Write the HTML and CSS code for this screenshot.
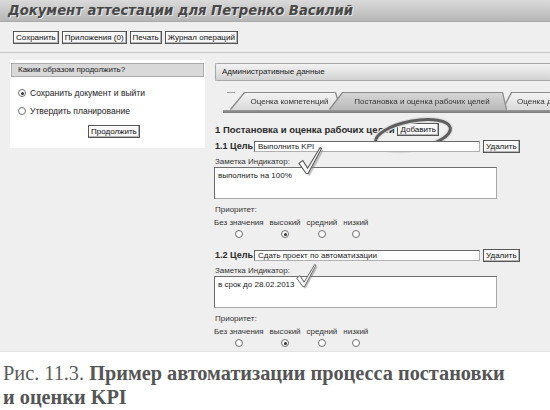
FILE: index.html
```html
<!DOCTYPE html>
<html lang="ru">
<head>
<meta charset="utf-8">
<title>Документ аттестации</title>
<link rel="stylesheet" href="styles.css">
</head>
<body>
<div class="shot">
  <div class="titlebar"><h1>Документ аттестации для Петренко Василий</h1></div>
  <div class="toolbar">
    <span class="btn">Сохранить</span>
    <span class="btn">Приложения (0)</span>
    <span class="btn">Печать</span>
    <span class="btn">Журнал операций</span>
  </div>
  <div class="main">
    <div class="left">
      <div class="panel">
        <div class="panel-h">Каким образом продолжить?</div>
        <div class="opt"><span class="radio on"></span>Сохранить документ и выйти</div>
        <div class="opt"><span class="radio"></span>Утвердить планирование</div>
        <span class="btn btn-go">Продолжить</span>
      </div>
    </div>
    <div class="right">
      <div class="rhead">Административные данные</div>
      <div class="tabs">
        <span class="dash"></span>
        <div class="tabw t1"><div class="tab">Оценка компетенций</div></div>
        <div class="tabw t2"><div class="tab">Постановка и оценка рабочих целей</div></div>
        <div class="tabw t3"><div class="tab">Оценка д</div></div>
      </div>
      <div class="tabline"></div>
      <div class="content">
        <div class="heading"><span class="htext">1 Постановка и оценка рабочих целей</span><span class="btn">Добавить</span></div>
        <svg class="oval" viewBox="0 0 86 40" width="86" height="40">
          <ellipse cx="42" cy="19" rx="38" ry="14" transform="rotate(-11 42 19)" fill="none" stroke="#dcdcdc" stroke-width="5.5"/>
          <ellipse cx="42" cy="19" rx="38" ry="14" transform="rotate(-11 42 19)" fill="none" stroke="#5e5e5e" stroke-width="3"/>
        </svg>

        <div class="goal">
          <div class="row"><span class="glabel">1.1 Цель</span><span class="input">Выполнить KPI</span><span class="btn">Удалить</span></div>
          <div class="lbl">Заметка Индикатор:</div>
          <div class="ta">выполнить на 100%</div>
          <div class="lbl prio">Приоритет:</div>
          <div class="choices">
            <div class="ch"><span>Без значения</span><span class="radio"></span></div>
            <div class="ch"><span>высокий</span><span class="radio on"></span></div>
            <div class="ch"><span>средний</span><span class="radio"></span></div>
            <div class="ch"><span>низкий</span><span class="radio"></span></div>
          </div>
          <svg class="check c1" viewBox="0 0 28 31" width="27" height="30">
            <path d="M2 18 L6 15 L11 23 L24 1.5 L25.5 2.5 L11.5 28.5 L9.5 28.5 Z" fill="#8a8a8a" transform="translate(2 2)" opacity="0.5"/>
            <path d="M2 18 L6 15 L11 23 L24 1.5 L25.5 2.5 L11.5 28.5 L9.5 28.5 Z" fill="#fbfbfb" stroke="#555" stroke-width="1.1"/>
          </svg>
        </div>

        <div class="goal g2">
          <div class="row"><span class="glabel">1.2 Цель</span><span class="input">Сдать проект по автоматизации</span><span class="btn">Удалить</span></div>
          <div class="lbl">Заметка Индикатор:</div>
          <div class="ta">в срок до 28.02.2013</div>
          <div class="lbl prio">Приоритет:</div>
          <div class="choices">
            <div class="ch"><span>Без значения</span><span class="radio"></span></div>
            <div class="ch"><span>высокий</span><span class="radio on"></span></div>
            <div class="ch"><span>средний</span><span class="radio"></span></div>
            <div class="ch"><span>низкий</span><span class="radio"></span></div>
          </div>
          <svg class="check c2" viewBox="0 0 28 31" width="23" height="26">
            <path d="M2 18 L6 15 L11 23 L24 1.5 L25.5 2.5 L11.5 28.5 L9.5 28.5 Z" fill="#8a8a8a" transform="translate(2 2)" opacity="0.5"/>
            <path d="M2 18 L6 15 L11 23 L24 1.5 L25.5 2.5 L11.5 28.5 L9.5 28.5 Z" fill="#fbfbfb" stroke="#555" stroke-width="1.1"/>
          </svg>
        </div>
      </div>
    </div>
  </div>
</div>
<p class="caption"><span class="reg">Рис. 11.3.</span> <b>Пример автоматизации процесса постановки<br>и оценки KPI</b></p>
</body>
</html>
```

FILE: styles.css
```css
body {
  margin: 0;
  background: #ffffff;
  font-family: "Liberation Sans", Arial, sans-serif;
  color: #222;
}

.shot {
  height: 352px;
  background: #efefef;
  overflow: hidden;
  border-bottom: 1px solid #e2e2e2;
  box-sizing: border-box;
}

.titlebar {
  height: 22px;
  box-sizing: border-box;
  padding-left: 8px;
  background: linear-gradient(#dadada, #b6b6b6);
  border-bottom: 1px solid #a9a9a9;
}

.titlebar h1 {
  margin: 0;
  font: italic bold 13.2px/21px "DejaVu Sans", sans-serif;
  color: #474747;
  text-shadow: 1px 1px 0 #e6e6e6;
  white-space: nowrap;
}

.toolbar {
  height: 31px;
  box-sizing: border-box;
  display: flex;
  align-items: flex-start;
  gap: 3px;
  padding: 9px 0 0 13px;
  border-bottom: 1px solid #c9c9c9;
}

.btn {
  display: inline-block;
  height: 13px;
  box-sizing: border-box;
  padding: 0 2px;
  font-size: 8px;
  line-height: 11px;
  color: #111;
  background: #f7f7f7;
  border: 1px solid #555;
  box-shadow: inset -1px -1px 0 #b4b4b4, inset 1px 1px 0 #fff;
  white-space: nowrap;
}

.main {
  display: flex;
}

.left {
  width: 213px;
  flex: none;
}

.panel {
  margin: 7px 0 0 10px;
  width: 195px;
  box-sizing: border-box;
  background: #fff;
  padding: 3px 1px 10px;
}

.panel-h {
  height: 14px;
  box-sizing: border-box;
  background: #d9d9d9;
  border: 1px solid #ababab;
  padding-left: 6px;
  font-size: 8px;
  line-height: 12px;
  color: #222;
}

.opt {
  display: flex;
  align-items: center;
  gap: 4px;
  height: 18px;
  padding-left: 7px;
  font-size: 8.5px;
  color: #222;
}

.panel-h + .opt {
  margin-top: 7px;
}

.btn-go {
  margin: 4px 0 0 77px;
}

.radio {
  display: inline-block;
  width: 8px;
  height: 8px;
  box-sizing: border-box;
  border: 1px solid #6e6e6e;
  border-radius: 50%;
  background: #fff;
  position: relative;
}

.radio.on::after {
  content: "";
  position: absolute;
  left: 1.5px;
  top: 1.5px;
  width: 3px;
  height: 3px;
  border-radius: 50%;
  background: #333;
}

.right {
  flex: 1;
  padding-top: 10px;
  min-width: 0;
}

.rhead {
  margin-left: 2px;
  height: 18px;
  box-sizing: border-box;
  border: 1px solid #a8a8a8;
  border-right: none;
  border-radius: 2px 0 0 2px;
  background: linear-gradient(#f3f3f3, #d2d2d2);
  padding-left: 6px;
  font-size: 8px;
  line-height: 16px;
  color: #222;
}

.tabs {
  margin-top: 7px;
  height: 22px;
  display: flex;
  align-items: flex-end;
  overflow: hidden;
}

.dash {
  align-self: flex-start;
  margin: 4px -4px 0 14px;
  width: 8px;
  height: 1px;
  background: #a0a0a0;
  flex: none;
}

.tabw {
  flex: none;
  filter: drop-shadow(-1px 0 0 #8c8c8c) drop-shadow(1px 0 0 #8c8c8c) drop-shadow(0 -1px 0 #8c8c8c);
}

.tab {
  height: 17px;
  font-size: 8px;
  line-height: 18px;
  color: #333;
  text-align: center;
  white-space: nowrap;
}

.t1 .tab {
  width: 109px;
  padding-left: 8px;
  box-sizing: border-box;
  background: linear-gradient(#f4f4f4, #d9d9d9);
  clip-path: polygon(14px 0, calc(100% - 5px) 0, 100% 100%, 0 100%);
}

.t2 {
  margin-left: -10px;
  position: relative;
  z-index: 2;
}

.t2 .tab {
  width: 176px;
  padding: 0 4px 0 12px;
  box-sizing: border-box;
  background: linear-gradient(#d6d6d6, #bababa);
  clip-path: polygon(13px 0, calc(100% - 4px) 0, 100% 100%, 0 100%);
}

.t3 {
  margin-left: -3px;
  position: relative;
  z-index: 1;
}

.t3 .tab {
  width: 60px;
  padding-left: 14px;
  box-sizing: border-box;
  text-align: left;
  background: linear-gradient(#f4f4f4, #d9d9d9);
  clip-path: polygon(9px 0, 100% 0, 100% 100%, 0 100%);
}

.tabline {
  margin-left: 10px;
  height: 3px;
  background: linear-gradient(#9c9c9c, #7a7a7a);
}

.content {
  position: relative;
  padding-left: 1px;
}

.heading {
  margin-top: 9px;
  height: 14px;
  display: flex;
  align-items: center;
  gap: 3px;
  padding-left: 1px;
}

.htext {
  font-size: 9.5px;
  font-weight: bold;
  color: #2a2a2a;
  white-space: nowrap;
}

.oval {
  position: absolute;
  left: 158px;
  top: -6px;
}

.goal {
  position: relative;
  margin-top: 3px;
}

.goal.g2 {
  margin-top: 10px;
}

.row {
  display: flex;
  align-items: center;
  height: 14px;
}

.glabel {
  width: 40px;
  flex: none;
  padding-left: 1px;
  box-sizing: border-box;
  font-size: 9px;
  font-weight: bold;
  color: #2a2a2a;
}

.input {
  width: 226px;
  height: 11px;
  box-sizing: border-box;
  background: #fff;
  border: 1px solid #6a6a6a;
  border-right-color: #b0b0b0;
  border-bottom-color: #b0b0b0;
  padding-left: 3px;
  font-size: 8px;
  line-height: 9px;
  color: #222;
  margin-right: 3px;
}

.lbl {
  margin-top: 4px;
  padding-left: 1px;
  font-size: 8px;
  line-height: 10px;
  color: #333;
}

.ta {
  width: 283px;
  height: 32px;
  box-sizing: border-box;
  background: #fff;
  border: 1px solid #6e6e6e;
  border-right-color: #a8a8a8;
  border-bottom-color: #a8a8a8;
  padding: 3px 3px;
  font-size: 8px;
  line-height: 10px;
  color: #222;
}

.lbl.prio {
  margin-top: 6px;
}

.choices {
  margin-top: 3px;
  display: flex;
  gap: 6px;
}

.ch {
  display: flex;
  flex-direction: column;
  align-items: center;
  gap: 3px;
  font-size: 8px;
  line-height: 9px;
  color: #333;
}

.check {
  position: absolute;
}

.check.c1 {
  left: 83px;
  top: 7px;
}

.check.c2 {
  left: 81px;
  top: 15px;
}

.caption {
  margin: 0;
  padding: 9px 0 0 3px;
  font-family: "Liberation Serif", "Times New Roman", serif;
  font-size: 20.3px;
  line-height: 24px;
  color: #5b5b5b;
}

.caption b {
  color: #555;
}
```
